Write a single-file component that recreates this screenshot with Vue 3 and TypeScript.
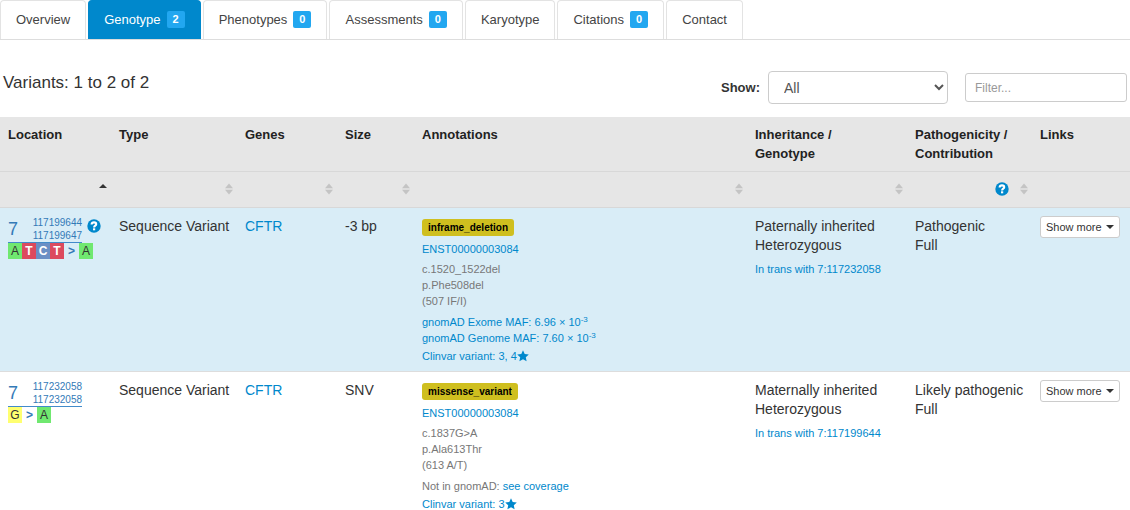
<script setup lang="ts">
import { ref } from 'vue'

interface Tab { name: string; count?: number }
interface Variant {
  chr: string
  start: string
  end: string
  help: boolean
  refAllele: string[]
  altAllele: string[]
  type: string
  gene: string
  size: string
  effect: string
  transcript: string
  changes: string[]
  maf: { label: string; value: string; exp: string }[]
  clinvar: string
  inheritance: string
  genotype: string
  trans: string
  pathogenicity: string
  contribution: string
}

const tabs: Tab[] = [
  { name: 'Overview' },
  { name: 'Genotype', count: 2 },
  { name: 'Phenotypes', count: 0 },
  { name: 'Assessments', count: 0 },
  { name: 'Karyotype' },
  { name: 'Citations', count: 0 },
  { name: 'Contact' },
]
const active = ref('Genotype')
const shown = ref('All')
const filter = ref('')

const columns = [
  { key: 'location', lines: ['Location'] },
  { key: 'type', lines: ['Type'] },
  { key: 'genes', lines: ['Genes'] },
  { key: 'size', lines: ['Size'] },
  { key: 'annotations', lines: ['Annotations'] },
  { key: 'inheritance', lines: ['Inheritance /', 'Genotype'] },
  { key: 'pathogenicity', lines: ['Pathogenicity /', 'Contribution'] },
  { key: 'links', lines: ['Links'] },
]

const variants: Variant[] = [
  {
    chr: '7', start: '117199644', end: '117199647', help: true,
    refAllele: ['A', 'T', 'C', 'T'], altAllele: ['A'],
    type: 'Sequence Variant', gene: 'CFTR', size: '-3 bp',
    effect: 'inframe_deletion', transcript: 'ENST00000003084',
    changes: ['c.1520_1522del', 'p.Phe508del', '(507 IF/I)'],
    maf: [
      { label: 'gnomAD Exome MAF:', value: '6.96 × 10', exp: '-3' },
      { label: 'gnomAD Genome MAF:', value: '7.60 × 10', exp: '-3' },
    ],
    clinvar: '3, 4',
    inheritance: 'Paternally inherited', genotype: 'Heterozygous', trans: 'In trans with 7:117232058',
    pathogenicity: 'Pathogenic', contribution: 'Full',
  },
  {
    chr: '7', start: '117232058', end: '117232058', help: false,
    refAllele: ['G'], altAllele: ['A'],
    type: 'Sequence Variant', gene: 'CFTR', size: 'SNV',
    effect: 'missense_variant', transcript: 'ENST00000003084',
    changes: ['c.1837G>A', 'p.Ala613Thr', '(613 A/T)'],
    maf: [],
    clinvar: '3',
    inheritance: 'Maternally inherited', genotype: 'Heterozygous', trans: 'In trans with 7:117199644',
    pathogenicity: 'Likely pathogenic', contribution: 'Full',
  },
]
</script>

<template>
  <main class="page">
    <nav class="tabs">
      <a
        v-for="t in tabs"
        :key="t.name"
        href="#"
        class="tab"
        :class="{ active: t.name === active }"
        @click.prevent="active = t.name"
      >{{ t.name }}<span v-if="t.count !== undefined" class="badge">{{ t.count }}</span></a>
    </nav>

    <div class="toolbar">
      <h1 class="title">Variants: 1 to 2 of 2</h1>
      <label class="show-label" for="show">Show:</label>
      <select id="show" v-model="shown" class="show">
        <option>All</option>
      </select>
      <input v-model="filter" class="filter" type="text" placeholder="Filter..." aria-label="Filter variants">
    </div>

    <table class="variants">
      <colgroup>
        <col v-for="c in columns" :key="c.key" :class="'col-' + c.key">
      </colgroup>
      <thead>
        <tr>
          <th v-for="c in columns" :key="c.key" scope="col">
            <div v-for="l in c.lines" :key="l">{{ l }}</div>
          </th>
        </tr>
        <tr class="sort-row">
          <td v-for="c in columns" :key="c.key">
            <div v-if="c.key !== 'links'" class="sorters">
              <svg v-if="c.key === 'pathogenicity'" class="help" viewBox="0 0 14 14" aria-hidden="true">
                <circle cx="7" cy="7" r="6.7" />
                <path d="M4.600 5.500C4.700 4 5.700 3.400 7 3.400c1.400 0 2.200.7 2.200 1.800 0 1.500-2.100 1.500-2.100 3.200" />
                <rect x="6" y="9.300" width="2.200" height="2" />
              </svg>
              <button type="button" class="sorter" :aria-label="'Sort by ' + c.key">
                <svg viewBox="0 0 8 12" aria-hidden="true">
                  <path v-if="c.key === 'location'" class="on" d="M0 5 4 1l4 4z" />
                  <path v-else d="M0 5.300 4 .5l4 4.800zM0 6.700h8L4 11.500z" />
                </svg>
              </button>
            </div>
          </td>
        </tr>
      </thead>
      <tbody>
        <tr v-for="v in variants" :key="v.start" :class="{ info: v.help }">
          <td>
            <div class="location">
              <a href="#" class="position">
                <span class="chr">{{ v.chr }}</span>
                <span class="range"><span>{{ v.start }}</span><span>{{ v.end }}</span></span>
              </a>
              <svg v-if="v.help" class="help" viewBox="0 0 14 14" aria-hidden="true">
                <circle cx="7" cy="7" r="6.7" />
                <path d="M4.600 5.500C4.700 4 5.700 3.400 7 3.400c1.400 0 2.200.7 2.200 1.800 0 1.500-2.100 1.500-2.100 3.200" />
                <rect x="6" y="9.300" width="2.200" height="2" />
              </svg>
            </div>
            <div class="alleles">
              <span v-for="(b, i) in v.refAllele" :key="'r' + i" :class="'base base-' + b">{{ b }}</span>
              <span class="base arrow">&gt;</span>
              <span v-for="(b, i) in v.altAllele" :key="'a' + i" :class="'base base-' + b">{{ b }}</span>
            </div>
          </td>
          <td class="plain">{{ v.type }}</td>
          <td class="plain"><a href="#">{{ v.gene }}</a></td>
          <td class="plain">{{ v.size }}</td>
          <td class="annotations">
            <span class="effect">{{ v.effect }}</span>
            <div class="transcript"><a href="#">{{ v.transcript }}</a></div>
            <div class="changes"><div v-for="c in v.changes" :key="c">{{ c }}</div></div>
            <div class="gnomad">
              <div v-for="m in v.maf" :key="m.label"><a href="#">{{ m.label }} {{ m.value }}<sup>{{ m.exp }}</sup></a></div>
              <div v-if="!v.maf.length">Not in gnomAD: <a href="#">see coverage</a></div>
            </div>
            <div class="clinvar">
              <a href="#">Clinvar variant: {{ v.clinvar }}</a>
              <svg class="star" viewBox="0 0 12 12" aria-hidden="true">
                <path d="M6 .3 7.700 4l4.100.5-3 2.800.8 4L6 9.300l-3.600 2 .8-4-3-2.800L4.300 4z" />
              </svg>
            </div>
          </td>
          <td class="plain">
            {{ v.inheritance }}<br>{{ v.genotype }}
            <div class="trans"><a href="#">{{ v.trans }}</a></div>
          </td>
          <td class="plain">{{ v.pathogenicity }}<br>{{ v.contribution }}</td>
          <td><button type="button" class="more">Show more<span class="caret"></span></button></td>
        </tr>
      </tbody>
    </table>
  </main>
</template>

<style>
body {
  margin: 0;
  background: #fff;
  overflow: hidden;
}
</style>

<style scoped>
.page {
  color: #333;
  font-family: "Liberation Sans", Arial, sans-serif;
  font-size: 14px;
  line-height: 19px;
}
a {
  color: #0088cc;
  text-decoration: none;
}
.tabs {
  display: flex;
  gap: 2px;
  height: 39px;
  border-bottom: 1px solid #ddd;
}
.tab {
  display: flex;
  align-items: center;
  box-sizing: border-box;
  padding: 0 15px 1px;
  border: 1px solid #e3e3e3;
  border-bottom: 0;
  border-radius: 4px 4px 0 0;
  color: #444;
  font-size: 13px;
}
.tab.active {
  background: #0088cc;
  border-color: #0088cc;
  color: #fff;
}
.badge {
  margin-left: 6px;
  padding: 0 6px;
  border-radius: 2px;
  background: #22a7f0;
  color: #fff;
  font-size: 11px;
  font-weight: bold;
  line-height: 17px;
}
.toolbar {
  display: flex;
  align-items: center;
  height: 33px;
  padding: 31px 3px 13px;
}
.title {
  flex: 1;
  margin: 0 0 10px;
  font-size: 17px;
  font-weight: normal;
}
.show-label {
  margin-right: 8px;
  font-size: 13px;
  font-weight: bold;
}
.show,
.filter {
  box-sizing: border-box;
  border: 1px solid #ccc;
  border-radius: 4px;
  background: #fff;
  color: #555;
  font-family: inherit;
}
.show {
  width: 180px;
  height: 33px;
  margin-right: 17px;
  padding: 0 0 0 11px;
  font-size: 14px;
}
.filter {
  width: 162px;
  height: 29px;
  padding: 0 9px;
  border-radius: 3px;
  font-size: 12px;
}
.filter::placeholder {
  color: #999;
}
.variants {
  width: 100%;
  table-layout: fixed;
  border-collapse: separate;
  border-spacing: 0;
}
.col-location { width: 111px; }
.col-type { width: 126px; }
.col-genes { width: 100px; }
.col-size { width: 77px; }
.col-inheritance { width: 160px; }
.col-pathogenicity { width: 125px; }
.col-links { width: 98px; }
th,
td {
  box-sizing: border-box;
  padding: 8px;
  text-align: left;
  vertical-align: top;
}
th {
  color: #222;
  font-size: 13px;
}
thead tr {
  background: #e6e6e6;
}
.sort-row td {
  height: 37px;
  padding: 0 4px 2px;
  border-top: 1px solid #d8d8d8;
  border-bottom: 1px solid #d8d8d8;
  vertical-align: middle;
}
.sorters {
  display: flex;
  justify-content: flex-end;
  align-items: center;
  gap: 11px;
}
.sorter {
  display: block;
  width: 8px;
  height: 12px;
  padding: 0;
  border: 0;
  background: none;
}
.sorter svg {
  display: block;
  fill: #c4c4c4;
}
.sorter .on {
  fill: #333;
}
.help {
  width: 14px;
  height: 14px;
  fill: #0088cc;
}
.help path {
  fill: none;
  stroke: #fff;
  stroke-width: 2.100;
}
.help rect {
  fill: #fff;
}
tbody td {
  border-bottom: 1px solid #ddd;
  padding-bottom: 7px;
}
tbody .plain {
  padding-top: 9px;
  white-space: nowrap;
}
.info {
  background: #d9edf7;
}
.location {
  display: flex;
  gap: 5px;
  align-items: flex-start;
}
.location .help {
  margin-top: 3px;
}
.position {
  display: flex;
  align-items: center;
  justify-content: space-between;
  width: 74px;
  border-bottom: 1px solid #428bca;
  color: #337ab7;
}
.chr {
  font-size: 18px;
}
.range {
  display: flex;
  flex-direction: column;
  font-size: 10px;
  line-height: 13px;
}
.alleles {
  display: flex;
}
.base {
  width: 14px;
  color: #fff;
  font-size: 12px;
  font-weight: bold;
  line-height: 16px;
  text-align: center;
}
.base-A,
.base-G {
  color: #333;
  font-weight: normal;
}
.base-A { background: #70e870; }
.base-T { background: #dc4a5e; }
.base-C { background: #6a8fc5; }
.base-G { background: #ffff70; }
.base.arrow {
  width: 15px;
  color: #337ab7;
}
.annotations,
.trans {
  font-size: 11px;
  line-height: 16px;
}
.annotations {
  color: #777;
}
.effect {
  display: inline-block;
  margin-top: 3px;
  padding: 0 6px;
  border-radius: 3px;
  background: #cfbf1f;
  color: #000;
  font-size: 10px;
  font-weight: bold;
  line-height: 17px;
  vertical-align: top;
}
.transcript {
  margin-top: 5px;
}
.changes {
  margin-top: 4px;
}
.gnomad {
  margin-top: 5px;
}
sup {
  font-size: 8px;
  line-height: 0;
  vertical-align: 4px;
}
.clinvar {
  display: flex;
  align-items: center;
  margin-top: 2px;
}
.star {
  width: 12px;
  height: 12px;
  fill: #0088cc;
}
.trans {
  margin-top: 6px;
}
.more {
  display: flex;
  align-items: center;
  gap: 4px;
  height: 22px;
  padding: 0 5px;
  border: 1px solid #ccc;
  border-radius: 3px;
  background: #fff;
  color: #333;
  font-family: inherit;
  font-size: 11px;
  white-space: nowrap;
}
.caret {
  border-top: 4px solid #333;
  border-left: 4px solid transparent;
  border-right: 4px solid transparent;
}
</style>
